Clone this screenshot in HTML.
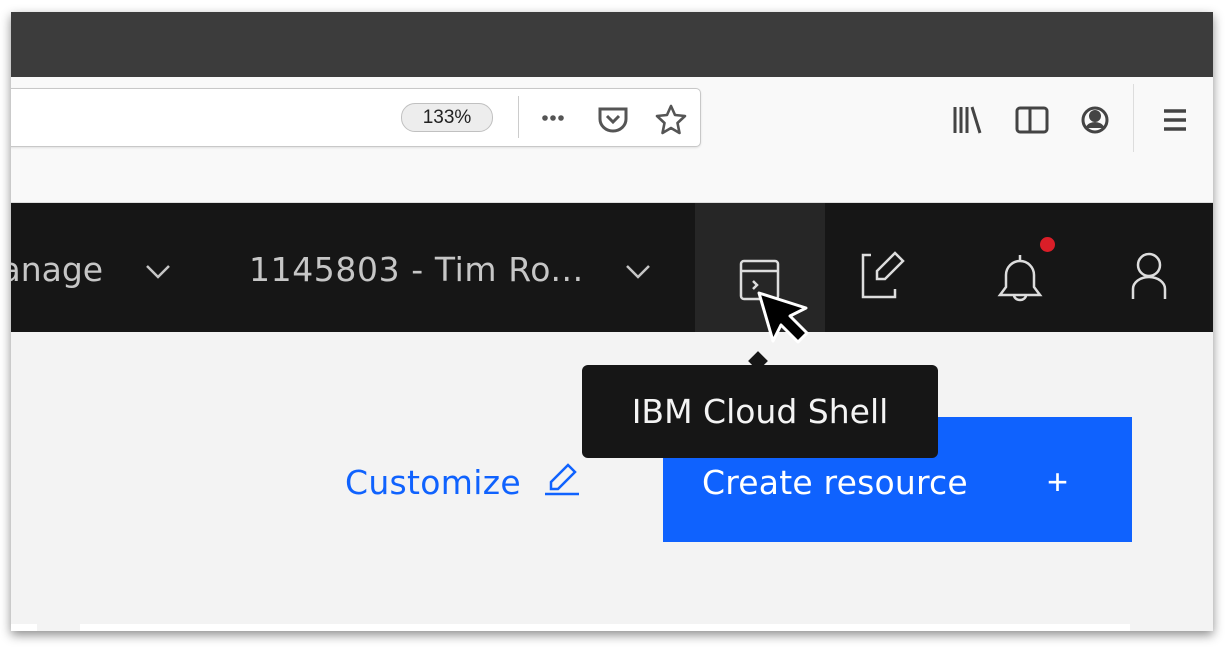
<!DOCTYPE html>
<html><head><style>
body{margin:0;width:1232px;height:650px;background:#fff;position:relative;overflow:hidden;font-family:"Liberation Sans",sans-serif}
.win{position:absolute;left:11px;top:12px;width:1202px;height:619px;overflow:hidden;box-shadow:0 4px 10px rgba(0,0,0,.45);background:#f3f3f3}
.abs{position:absolute}
.t{font-family:'DejaVu Sans',sans-serif;font-size:33px;letter-spacing:0}
</style></head><body>
<div class="win">
 <div class="abs" style="left:0;top:0;width:1202px;height:65px;background:#3c3c3c"></div>
 <div class="abs" style="left:0;top:65px;width:1202px;height:125px;background:#f9f9f9;border-bottom:2px solid #ddd"></div>
 <div class="abs" style="left:-10px;top:76px;width:698px;height:57px;background:#fff;border:1px solid #c8c8c8;border-radius:5px;box-shadow:0 1px 2px rgba(0,0,0,.1)"></div>
 <div class="abs" style="left:390px;top:91px;width:90px;height:27px;border:1px solid #c0c0c0;border-radius:14px;background:#ededed;font-size:19px;line-height:27px;text-align:center;color:#222">133%</div>
 <div class="abs" style="left:507px;top:84px;width:1px;height:42px;background:#ccc"></div>
 <svg class="abs" style="left:525px;top:90px" width="170" height="34">
  <g fill="#555"><circle cx="9" cy="16" r="2.8"/><circle cx="17" cy="16" r="2.8"/><circle cx="25" cy="16" r="2.8"/></g>
  <path d="M64 7h26v10a13 12 0 0 1-26 0z" fill="none" stroke="#555" stroke-width="3"/>
  <path d="M71 14l6 6 6-6" fill="none" stroke="#555" stroke-width="3"/>
  <path d="M135 4l4 9 10 1-7.5 7 2 10-8.5-5-8.5 5 2-10-7.5-7 10-1z" fill="none" stroke="#555" stroke-width="2.6" stroke-linejoin="round"/>
 </svg>
 <svg class="abs" style="left:935px;top:90px" width="260" height="40">
  <g stroke="#444" stroke-width="3" fill="none">
   <path d="M9 5v26M15 5v26M21 5v26M26 5l8 26"/>
   <rect x="71" y="6" width="30" height="24" rx="3"/><path d="M84 6v24"/>
   <circle cx="149" cy="18" r="12"/><circle cx="149" cy="14" r="4.5" fill="#444"/><path d="M141 26c3-6 13-6 16 0" fill="#444"/>
   <path d="M218 9h22M218 18h22M218 27h22" stroke-width="3.5"/>
  </g>
 </svg>
 <div class="abs" style="left:1122px;top:72px;width:1px;height:68px;background:#ddd"></div>
 <div class="abs" style="left:0;top:191px;width:1202px;height:129px;background:#161616"></div>
 <div class="abs" style="left:684px;top:191px;width:130px;height:129px;background:#262626"></div>
 <div class="abs t" style="left:-39px;top:238px;color:#c6c6c6">Manage</div>
 <div class="abs t" style="left:238px;top:238px;color:#c6c6c6;letter-spacing:0.6px">1145803 - Tim Ro...</div>
 <svg class="abs" style="left:130px;top:245px" width="540" height="30"><path d="M6 9l11 11 11-11M486 9l11 11 11-11" fill="none" stroke="#c6c6c6" stroke-width="2.5"/></svg>
 <svg class="abs" style="left:720px;top:235px" width="460" height="60" fill="none" stroke="#ddd" stroke-width="2.5">
  <rect x="10" y="14" width="37" height="38" rx="3"/><path d="M10 24h37M22 34l4 4-4 4"/>
  <path d="M164 6l8 8-18 18h-8v-8zM140 8h-8v42h32v-8"/>
  <path d="M289 8v6M289 14a14 14 0 0 1 14 14v12l6 8h-40l6-8v-12a14 14 0 0 1 14-14M283 48a6 5 0 0 0 12 0"/>
  <circle cx="418" cy="18" r="11"/><path d="M402 52v-10a16 12 0 0 1 32 0v10"/>
 </svg>
 <div class="abs" style="left:1029px;top:225px;width:15px;height:15px;border-radius:50%;background:#da1e28"></div>
 <div class="abs" style="left:652px;top:405px;width:469px;height:125px;background:#0f62fe"></div>
 <div class="abs t" style="left:691px;top:451px;color:#fff;letter-spacing:0.2px">Create resource</div>
 <div class="abs" style="left:1036px;top:449px;font-size:36px;color:#fff">+</div>
 <div class="abs t" style="left:334px;top:451px;color:#0f62fe;letter-spacing:0.3px">Customize</div>
 <svg class="abs" style="left:530px;top:448px" width="40" height="40" fill="none" stroke="#0f62fe" stroke-width="2.5"><path d="M27 5l7 7-17 17h-7v-7zM4 34h34"/></svg>
 <div class="abs" style="left:571px;top:353px;width:356px;height:93px;background:#161616;border-radius:6px;color:#f4f4f4;font-size:33px;line-height:93px;text-align:center;font-family:'DejaVu Sans',sans-serif;z-index:5">IBM Cloud Shell</div>
 <div class="abs" style="left:740px;top:342px;width:14px;height:14px;background:#161616;transform:rotate(45deg);z-index:5"></div>
 <svg class="abs" style="left:742px;top:278px;z-index:6" width="70" height="70"><path d="M6 3l14 48 8-16 17 17 9-9-17-17 16-8z" fill="#000" stroke="#fff" stroke-width="3" stroke-linejoin="round"/></svg>
 <div class="abs" style="left:0;top:612px;width:26px;height:7px;background:#fff"></div>
 <div class="abs" style="left:69px;top:612px;width:1050px;height:7px;background:#fff"></div>
</div>
</body></html>
